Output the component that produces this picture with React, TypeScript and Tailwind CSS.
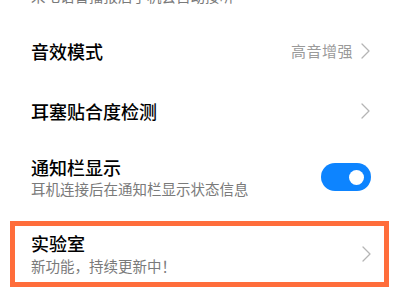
const font = { fontFamily: '"Noto Sans CJK SC", "Noto Sans", sans-serif' };

const Chevron = () => (
  <svg width="9" height="16" viewBox="0 0 9 16" fill="none" className="shrink-0">
    <polyline points="1,1 8,8 1,15" stroke="#b5b5b5" strokeWidth="1.3" strokeLinecap="round" strokeLinejoin="round" />
  </svg>
);

export default function App() {
  return (
    <div className="w-[400px] h-[300px] overflow-hidden bg-white flex flex-col" style={font}>
      {/* partial row from above */}
      <div className="-mt-[14px] pl-[31px] h-[20px] text-[14.5px] leading-[20px] text-[#7a7a7a]">
        来电语音播报后手机会自动接听
      </div>

      {/* 音效模式 */}
      <div className="mt-[15px] h-[60px] flex items-center justify-between pl-[31px] pr-[30px]">
        <span className="text-[18px] font-medium text-black">音效模式</span>
        <div className="flex items-center gap-[8px]">
          <span className="text-[15px] tracking-[0.5px] text-[#9a9a9a]">高音增强</span>
          <Chevron />
        </div>
      </div>

      {/* 耳塞贴合度检测 */}
      <div className="h-[60px] flex items-center justify-between pl-[31px] pr-[30px]">
        <span className="text-[18px] font-medium text-black">耳塞贴合度检测</span>
        <Chevron />
      </div>

      {/* 通知栏显示 */}
      <div className="h-[72px] flex items-center justify-between pl-[31px] pr-[29px]">
        <div className="flex flex-col">
          <span className="text-[18px] font-medium leading-[23px] text-black">通知栏显示</span>
          <span className="text-[14.5px] leading-[20px] text-[#7a7a7a]">耳机连接后在通知栏显示状态信息</span>
        </div>
        <div className="w-[50px] h-[28px] rounded-full bg-[#0d84ff] flex items-center justify-end pr-[7px]">
          <div className="w-[15px] h-[15px] rounded-full bg-white" />
        </div>
      </div>

      {/* 实验室 */}
      <div className="mt-[8px] ml-[10px] w-[379px] h-[66px] border-[5px] border-[#ff6d3b] flex items-center justify-between pl-[16px] pr-[13px]">
        <div className="flex flex-col">
          <span className="text-[18px] font-medium leading-[24px] text-black">实验室</span>
          <span className="text-[14.5px] leading-[22px] text-[#7a7a7a]">新功能，持续更新中！</span>
        </div>
        <Chevron />
      </div>
    </div>
  );
}
